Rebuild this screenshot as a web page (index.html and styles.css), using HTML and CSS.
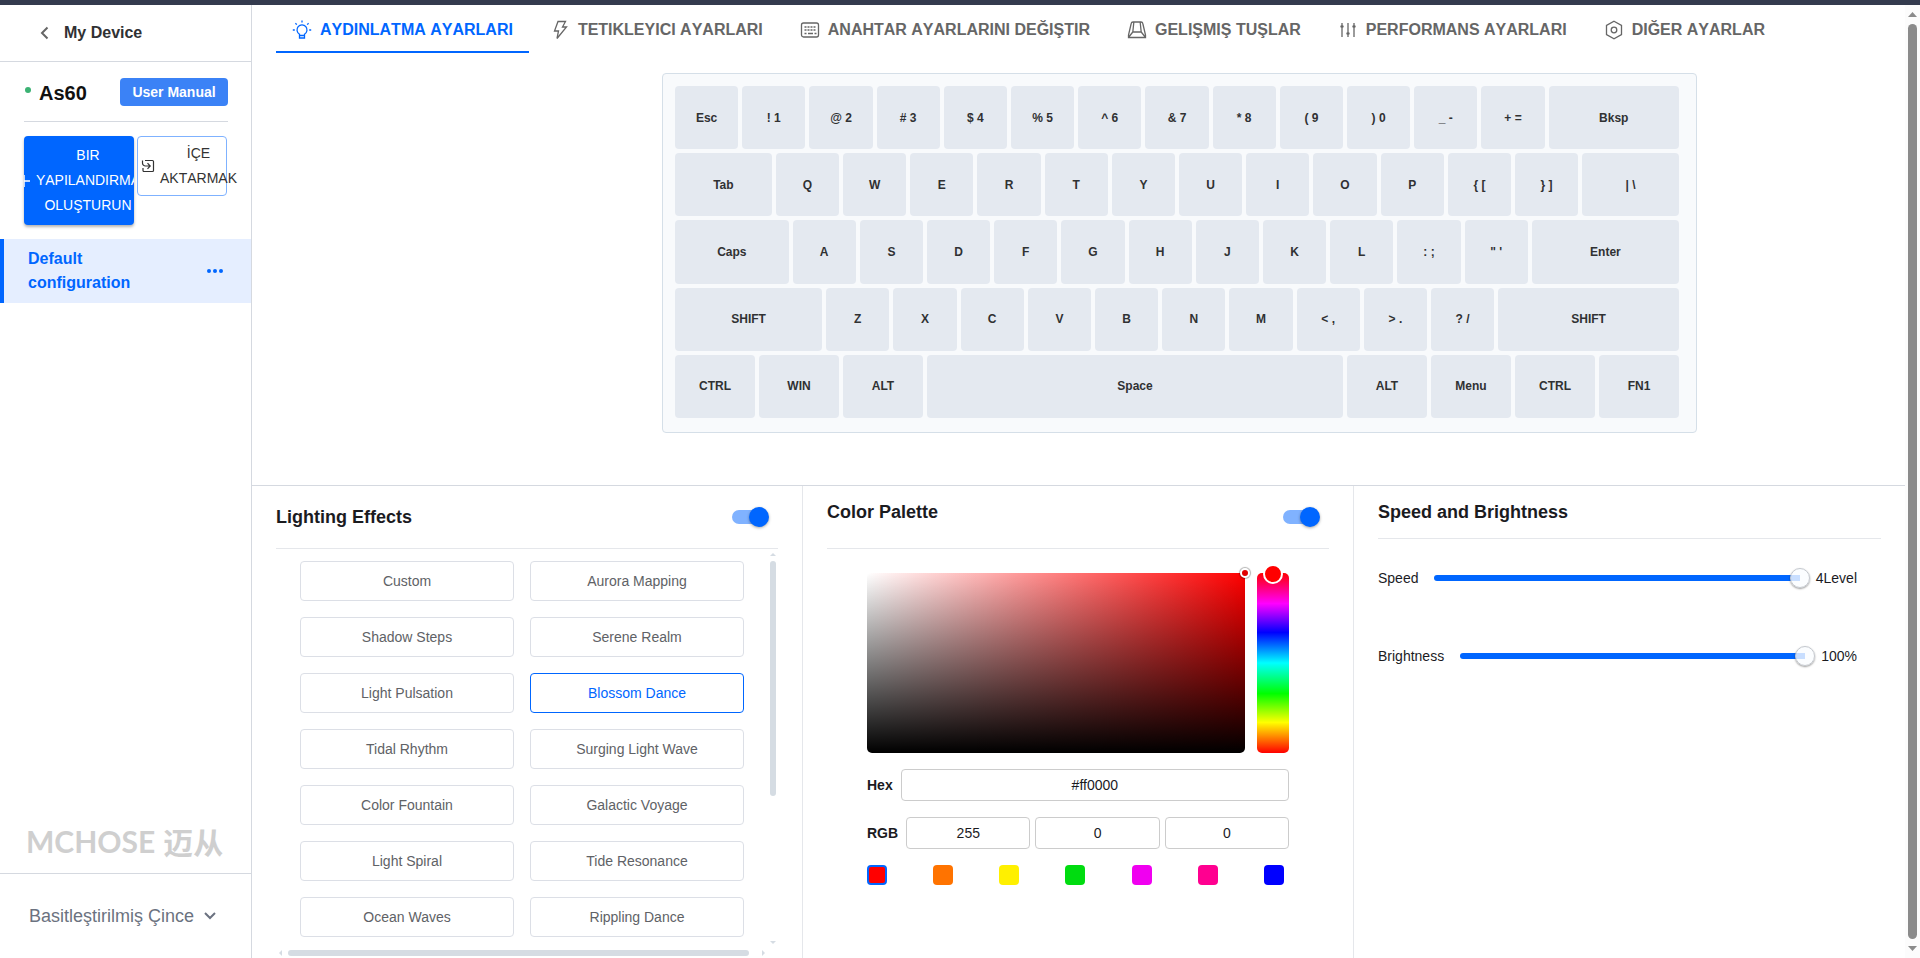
FILE: index.html
```html
<!DOCTYPE html>
<html lang="tr">
<head>
    <meta charset="UTF-8">
    <meta name="viewport" content="width=device-width, initial-scale=1.0">
    <title>MCHOSE As60</title>
    <link rel="stylesheet" href="styles.css">
</head>
<body>
    <div class="topbar"></div>
    <div class="layout">
        <aside class="sidebar">
            <a href="#" class="back">
                <svg width="12" height="14" viewBox="0 0 12 14" fill="none" stroke="#666" stroke-width="2"><path d="M7.5 1.500 2 7l5.500 5.500"/></svg>
                My Device
            </a>
            <div class="device">
                <span class="dot"></span>
                <h1>As60</h1>
                <button class="manual-btn">User Manual</button>
            </div>
            <div class="actions">
                <button class="create-btn">
                    <svg width="16" height="16" viewBox="0 0 16 16" stroke="#fff" stroke-width="1.5"><path d="M8 2v12M2 8h12"/></svg>
                    <span>BIR YAPILANDIRMA OLUŞTURUN</span>
                </button>
                <button class="import-btn">
                    <svg width="14" height="14" viewBox="0 0 14 14" fill="none" stroke="#333" stroke-width="1.2"><path d="M4 1.5h7.5a1 1 0 0 1 1 1v9a1 1 0 0 1-1 1H3a1 1 0 0 1-1-1V9M1.500 1.500v2.500a3 3 0 0 0 3 3H9M6.500 4.200 9.200 7 6.500 9.800"/></svg>
                    <span>İÇE AKTARMAK</span>
                </button>
            </div>
            <div class="config active">
                <span class="config-name">Default configuration</span>
                <button class="more-btn" aria-label="More">
                    <svg width="16" height="4" viewBox="0 0 16 4" fill="#0066ff"><circle cx="2" cy="2" r="2"/><circle cx="8" cy="2" r="2"/><circle cx="14" cy="2" r="2"/></svg>
                </button>
            </div>
            <div class="brand"><span class="brand-en">MCHOSE</span><span class="brand-cn">迈从</span></div>
            <div class="language">
                <select aria-label="Dil">
                    <option>Basitleştirilmiş Çince</option>
                </select>
                <svg width="12" height="8" viewBox="0 0 12 8" fill="none" stroke="#6b7280" stroke-width="2"><path d="M1 1l5 5 5-5"/></svg>
            </div>
        </aside>

        <main class="main">
            <nav class="tabs">
                <a href="#" class="tab active">
                    <svg width="20" height="20" viewBox="0 0 20 20"><path d="M7.500 15.500v-1.300a5 5 0 1 1 5 0v1.300zM7.500 15.500v2.500h5v-2.500M10 .5v2M3.400 3.200l1.400 1.400M16.600 3.200l-1.400 1.400M.8 10h2M17.200 10h2"/></svg>
                    AYDINLATMA AYARLARI
                </a>
                <a href="#" class="tab">
                    <svg width="20" height="20" viewBox="0 0 20 20"><path d="M8 1.500h7.500l-3 5.500h4L7 18.500l1.500-7.500H4.500z"/></svg>
                    TETIKLEYICI AYARLARI
                </a>
                <a href="#" class="tab">
                    <svg width="20" height="20" viewBox="0 0 20 20"><rect x="1.5" y="3" width="17" height="14" rx="2"/><path d="M4.500 7h11.500M4.500 10h11.500" stroke-dasharray="2 1"/><path d="M4.500 13.500h2M8 13.500h5M14.500 13.500h2"/></svg>
                    ANAHTAR AYARLARINI DEĞIŞTIR
                </a>
                <a href="#" class="tab">
                    <svg width="20" height="20" viewBox="0 0 20 20"><path d="M6 2h8q1.500 0 1.800 1.500L18.500 15v2.500h-17V15L4.200 3.500Q4.500 2 6 2zM6.800 2.500 5.800 12h8.400l-1-9.500M5.800 12l-4 5M14.200 12l4 5"/></svg>
                    GELIŞMIŞ TUŞLAR
                </a>
                <a href="#" class="tab">
                    <svg width="20" height="20" viewBox="0 0 20 20"><path d="M4 3v14M10 3v14M16 3v14M2.500 6.500h3M8.500 13.500h3M14.500 6.500h3"/><path d="M4 5.500v2M10 12.500v2M16 5.500v2" stroke-width="2.5"/></svg>
                    PERFORMANS AYARLARI
                </a>
                <a href="#" class="tab">
                    <svg width="20" height="20" viewBox="0 0 20 20"><path d="M10 1.200l7.500 4.300v9L10 18.800l-7.500-4.300v-9z"/><circle cx="10" cy="10" r="2.8"/></svg>
                    DIĞER AYARLAR
                </a>
            </nav>

            <section class="stage">
                <div class="keyboard">
                    <button class="key">Esc</button>
                    <button class="key">! 1</button>
                    <button class="key">@ 2</button>
                    <button class="key"># 3</button>
                    <button class="key">$ 4</button>
                    <button class="key">% 5</button>
                    <button class="key">^ 6</button>
                    <button class="key">&amp; 7</button>
                    <button class="key">* 8</button>
                    <button class="key">( 9</button>
                    <button class="key">) 0</button>
                    <button class="key">_ -</button>
                    <button class="key">+ =</button>
                    <button class="key u200">Bksp</button>

                    <button class="key u150">Tab</button>
                    <button class="key">Q</button>
                    <button class="key">W</button>
                    <button class="key">E</button>
                    <button class="key">R</button>
                    <button class="key">T</button>
                    <button class="key">Y</button>
                    <button class="key">U</button>
                    <button class="key">I</button>
                    <button class="key">O</button>
                    <button class="key">P</button>
                    <button class="key">{ [</button>
                    <button class="key">} ]</button>
                    <button class="key u150">| \</button>

                    <button class="key u175">Caps</button>
                    <button class="key">A</button>
                    <button class="key">S</button>
                    <button class="key">D</button>
                    <button class="key">F</button>
                    <button class="key">G</button>
                    <button class="key">H</button>
                    <button class="key">J</button>
                    <button class="key">K</button>
                    <button class="key">L</button>
                    <button class="key">: ;</button>
                    <button class="key">" '</button>
                    <button class="key u225">Enter</button>

                    <button class="key u225">SHIFT</button>
                    <button class="key">Z</button>
                    <button class="key">X</button>
                    <button class="key">C</button>
                    <button class="key">V</button>
                    <button class="key">B</button>
                    <button class="key">N</button>
                    <button class="key">M</button>
                    <button class="key">&lt; ,</button>
                    <button class="key">&gt; .</button>
                    <button class="key">? /</button>
                    <button class="key u275">SHIFT</button>

                    <button class="key u125">CTRL</button>
                    <button class="key u125">WIN</button>
                    <button class="key u125">ALT</button>
                    <button class="key u625">Space</button>
                    <button class="key u125">ALT</button>
                    <button class="key u125">Menu</button>
                    <button class="key u125">CTRL</button>
                    <button class="key u125">FN1</button>
                </div>
            </section>

            <div class="panels">
                <section class="panel">
                    <div class="panel-header tall">
                        <h2><label for="lighting">Lighting Effects</label></h2>
                        <input type="checkbox" id="lighting" class="switch" checked>
                    </div>
                    <div class="effects-wrap">
                        <div class="effects">
                            <button class="effect">Custom</button>
                            <button class="effect">Aurora Mapping</button>
                            <button class="effect">Shadow Steps</button>
                            <button class="effect">Serene Realm</button>
                            <button class="effect">Light Pulsation</button>
                            <button class="effect active">Blossom Dance</button>
                            <button class="effect">Tidal Rhythm</button>
                            <button class="effect">Surging Light Wave</button>
                            <button class="effect">Color Fountain</button>
                            <button class="effect">Galactic Voyage</button>
                            <button class="effect">Light Spiral</button>
                            <button class="effect">Tide Resonance</button>
                            <button class="effect">Ocean Waves</button>
                            <button class="effect">Rippling Dance</button>
                        </div>
                        <div class="scroll-y">
                            <svg width="6" height="3" viewBox="0 0 6 3"><path d="M0 3l3-3 3 3z"/></svg>
                            <div class="thumb"></div>
                            <svg class="end" width="6" height="3" viewBox="0 0 6 3"><path d="M0 0l3 3 3-3z"/></svg>
                        </div>
                    </div>
                    <div class="scroll-x">
                        <svg width="3" height="6" viewBox="0 0 3 6"><path d="M3 0L0 3l3 3z"/></svg>
                        <div class="thumb"></div>
                        <svg width="3" height="6" viewBox="0 0 3 6"><path d="M0 0l3 3-3 3z"/></svg>
                    </div>
                </section>

                <section class="panel">
                    <div class="panel-header tall">
                        <h2 class="top"><label for="palette">Color Palette</label></h2>
                        <input type="checkbox" id="palette" class="switch" checked>
                    </div>
                    <div class="picker">
                        <div class="picker-area">
                            <div class="saturation"><span class="sat-cursor"></span></div>
                            <div class="hue"><span class="hue-cursor"></span></div>
                        </div>
                        <div class="field">
                            <label for="hex">Hex</label>
                            <input type="text" id="hex" value="#ff0000">
                        </div>
                        <div class="field rgb">
                            <label for="red">RGB</label>
                            <input type="text" id="red" value="255">
                            <input type="text" aria-label="G" value="0">
                            <input type="text" aria-label="B" value="0">
                        </div>
                        <div class="swatches">
                            <button class="swatch red active" aria-label="Red"></button>
                            <button class="swatch orange" aria-label="Orange"></button>
                            <button class="swatch yellow" aria-label="Yellow"></button>
                            <button class="swatch green" aria-label="Green"></button>
                            <button class="swatch magenta" aria-label="Magenta"></button>
                            <button class="swatch pink" aria-label="Pink"></button>
                            <button class="swatch blue" aria-label="Blue"></button>
                        </div>
                    </div>
                </section>

                <section class="panel">
                    <div class="panel-header">
                        <h2>Speed and Brightness</h2>
                    </div>
                    <div class="sliders">
                        <div class="slider-row">
                            <label for="speed">Speed</label>
                            <input type="range" id="speed" min="0" max="4" value="4">
                            <span>4Level</span>
                        </div>
                        <div class="slider-row">
                            <label for="brightness">Brightness</label>
                            <input type="range" id="brightness" min="0" max="100" value="100">
                            <span>100%</span>
                        </div>
                    </div>
                </section>
            </div>
        </main>

        <div class="page-scroll">
            <svg width="9" height="5" viewBox="0 0 9 5"><path d="M0 5L4.500 0 9 5z"/></svg>
            <div class="thumb"></div>
            <svg width="9" height="5" viewBox="0 0 9 5"><path d="M0 0l4.500 5L9 0z"/></svg>
        </div>
    </div>
</body>
</html>
```

FILE: styles.css
```css
* {
    box-sizing: border-box;
}
body {
    margin: 0;
    height: 100vh;
    display: flex;
    flex-direction: column;
    overflow: hidden;
    font-family: "Liberation Sans", Arial, sans-serif;
    font-size: 14px;
    color: #1b1b1f;
    background-color: #fff;
}
button, input, select {
    font-family: inherit;
    font-size: 14px;
    margin: 0;
}
button {
    cursor: pointer;
    border: none;
}
a {
    text-decoration: none;
}
svg {
    flex-shrink: 0;
}
.topbar {
    height: 5px;
    flex-shrink: 0;
    background-color: #343b4e;
}
.layout {
    flex: 1;
    min-height: 0;
    display: flex;
}

/* Sidebar */
.sidebar {
    width: 252px;
    flex-shrink: 0;
    display: flex;
    flex-direction: column;
    border-right: 1px solid #d5d9e0;
}
.back {
    display: flex;
    align-items: center;
    gap: 12px;
    height: 57px;
    padding: 0 40px;
    border-bottom: 1px solid #d5d9e0;
    font-size: 16px;
    font-weight: bold;
    color: #303133;
}
.device {
    display: flex;
    align-items: center;
    margin: 0 23px 14px 24px;
    padding: 16px 0 15px;
    border-bottom: 1px solid #d5d9e0;
}
.dot {
    width: 6px;
    height: 6px;
    margin: 0 8px 4px 1px;
    border-radius: 50%;
    background-color: #3bb273;
}
.device h1 {
    margin: 0;
    padding-top: 2px;
    font-size: 20px;
    line-height: 26px;
    color: #111;
}
.manual-btn {
    margin-left: auto;
    width: 108px;
    height: 28px;
    padding: 0;
    border-radius: 4px;
    background-color: #3b82f6;
    color: #fff;
    font-weight: bold;
}
.actions {
    display: flex;
    align-items: flex-start;
    gap: 3px;
    padding: 0 24px 14px;
}
.create-btn, .import-btn {
    display: flex;
    align-items: center;
    flex-shrink: 0;
    border-radius: 4px;
    line-height: 25px;
    font-kerning: none;
}
.create-btn {
    justify-content: center;
    gap: 4px;
    width: 110px;
    padding: 7px 2px 7px 0;
    overflow: hidden;
    background-color: #0066ff;
    color: #fff;
    box-shadow: 0 2px 3px rgba(0,0,0,0.3);
}
.import-btn {
    gap: 5px;
    width: 90px;
    padding: 4px 3px;
    border: 1px solid #7fb2ff;
    background-color: #fff;
    color: #333;
}
.config {
    display: flex;
    align-items: center;
    justify-content: space-between;
    padding: 8px 28px 8px 24px;
    border-left: 4px solid #0066ff;
    background-color: #e5eeff;
}
.config-name {
    width: 110px;
    font-size: 16px;
    line-height: 24px;
    font-weight: bold;
    color: #0066ff;
}
.more-btn {
    display: flex;
    padding: 0;
    background: none;
}
.brand {
    display: flex;
    align-items: center;
    gap: 8px;
    height: 60px;
    margin-top: auto;
    padding: 0 26px 4px;
    color: #cfcfcf;
    font-weight: bold;
    white-space: nowrap;
}
.brand-en {
    font-family: Lato, sans-serif;
    font-size: 30px;
}
.brand-cn {
    font-family: "Noto Sans CJK SC", sans-serif;
    font-size: 30px;
    line-height: 32px;
}
.language {
    display: flex;
    align-items: center;
    gap: 9px;
    height: 85px;
    padding-left: 29px;
    border-top: 1px solid #d5d9e0;
}
.language select {
    appearance: none;
    border: none;
    padding: 0;
    background: none;
    font-size: 18px;
    color: #6b7280;
}

/* Tabs */
.main {
    flex: 1;
    min-width: 0;
    display: flex;
    flex-direction: column;
}
.tabs {
    display: flex;
    gap: 5px;
    padding-left: 24px;
}
.tab {
    display: flex;
    align-items: center;
    gap: 8px;
    height: 48px;
    padding: 1px 16px 0;
    font-size: 16px;
    font-weight: bold;
    font-kerning: none;
    white-space: nowrap;
    color: #666;
}
.tab svg {
    fill: none;
    stroke: currentColor;
    stroke-width: 1.3;
}
.tab.active {
    color: #0066ff;
    box-shadow: inset 0 -2px #0066ff;
}

/* Keyboard */
.stage {
    display: flex;
    justify-content: center;
    padding: 20px 0 52px 202px;
    border-bottom: 1px solid #d5d9e0;
}
.keyboard {
    display: grid;
    grid-template-columns: repeat(60, 1fr);
    grid-template-rows: repeat(5, 1fr);
    width: 1035px;
    height: 360px;
    padding: 12px 13px 10px 12px;
    border: 1px solid #d5dfe8;
    border-radius: 4px;
    background-color: #f8fafc;
}
/* one key unit = 4 columns */
.key {
    grid-column: span 4;
    min-width: 0;
    margin: 0 4px 4px 0;
    padding: 0;
    border-radius: 4px;
    background-color: #e4e9f0;
    color: #303133;
    font-size: 12px;
    font-weight: bold;
}
.u125 { grid-column: span 5; }
.u150 { grid-column: span 6; }
.u175 { grid-column: span 7; }
.u200 { grid-column: span 8; }
.u225 { grid-column: span 9; }
.u275 { grid-column: span 11; }
.u625 { grid-column: span 25; }

/* Panels */
.panels {
    flex: 1;
    min-height: 0;
    display: grid;
    grid-template-columns: repeat(3, minmax(0, 1fr));
}
.panel {
    display: flex;
    flex-direction: column;
    padding: 0 24px;
    border-right: 1px solid #e5e7eb;
}
.panel:last-child {
    border-right: none;
}
.panel-header {
    display: flex;
    align-items: center;
    justify-content: space-between;
    border-bottom: 1px solid #e5e7eb;
}
.panel-header.tall {
    min-height: 63px;
}
.panel-header h2 {
    margin: 0;
    font-size: 18px;
    line-height: 52px;
}
.panel-header h2.top {
    align-self: flex-start;
}
.switch {
    appearance: none;
    position: relative;
    width: 34px;
    height: 14px;
    margin-right: 12px;
    border-radius: 7px;
    background-color: #80b2ff;
    cursor: pointer;
}
.switch::before {
    content: "";
    position: absolute;
    top: -3px;
    right: -3px;
    width: 20px;
    height: 20px;
    border-radius: 50%;
    background-color: #0066ff;
    box-shadow: 0 1px 3px rgba(0,0,0,0.35);
}
.effects-wrap {
    flex: 1;
    min-height: 0;
    display: flex;
    justify-content: space-between;
}
.effects {
    flex: 1;
    display: grid;
    grid-template-columns: 1fr 1fr;
    align-content: start;
    gap: 16px;
    padding: 12px 26px 0 24px;
}
.effect {
    height: 40px;
    border: 1px solid #dcdfe6;
    border-radius: 4px;
    background-color: #fff;
    color: #606266;
}
.effect.active {
    border-color: #0066ff;
    color: #0066ff;
}
.scroll-y, .scroll-x {
    display: flex;
    align-items: center;
    fill: #d5dce3;
}
.scroll-y {
    flex-direction: column;
    gap: 5px;
    padding: 4px 2px 4px 0;
}
.scroll-y .thumb {
    width: 6px;
    height: 235px;
    border-radius: 3px;
    background-color: #d5dce3;
}
.scroll-y .end {
    margin-top: auto;
}
.scroll-x {
    justify-content: space-between;
    padding: 2px 13px 2px 3px;
}
.scroll-x .thumb {
    flex: 1;
    height: 6px;
    margin: 0 13px 0 6px;
    border-radius: 3px;
    background-color: #d5dce3;
}

/* Color picker */
.picker {
    display: flex;
    flex-direction: column;
    gap: 16px;
    padding: 24px 40px 0;
}
.picker-area {
    display: flex;
    gap: 12px;
    height: 180px;
}
.saturation {
    flex: 1;
    position: relative;
    border-radius: 5px 0 5px 5px;
    background: linear-gradient(to top, #000, transparent), linear-gradient(to right, #fff, #f00);
}
.sat-cursor {
    position: absolute;
    top: -5px;
    right: -5px;
    width: 10px;
    height: 10px;
    border: 2px solid #fff;
    border-radius: 50%;
    background-color: #e00000;
    box-shadow: 0 0 1px 1px rgba(0,0,0,0.3);
}
.hue {
    position: relative;
    width: 32px;
    border-radius: 5px;
    background: linear-gradient(to bottom, #f00 0%, #f0f 17%, #00f 33%, #0ff 50%, #0f0 67%, #ff0 83%, #f00 100%);
}
.hue-cursor {
    position: absolute;
    top: -9px;
    left: 6px;
    width: 20px;
    height: 20px;
    border: 2px solid #fff;
    border-radius: 50%;
    background-color: #f00;
}
.field {
    display: flex;
    align-items: center;
    gap: 8px;
}
.field.rgb {
    gap: 5px;
}
.field label {
    font-weight: bold;
}
.rgb label {
    margin-right: 3px;
}
.field input {
    flex: 1;
    min-width: 0;
    height: 32px;
    border: 1px solid #ccc;
    border-radius: 4px;
    background-color: #fff;
    color: #1b1b1f;
    text-align: center;
}
.swatches {
    display: flex;
    justify-content: space-between;
    padding-right: 5px;
}
.swatch {
    width: 20px;
    height: 20px;
    padding: 0;
    border-radius: 4px;
}
.swatch.active {
    border: 2px solid #0066ff;
}
.red { background-color: #f00; }
.orange { background-color: #ff7300; }
.yellow { background-color: #fff000; }
.green { background-color: #00dc10; }
.magenta { background-color: #f000f0; }
.pink { background-color: #ff0090; }
.blue { background-color: #00f; }

/* Sliders */
.sliders {
    display: flex;
    flex-direction: column;
    gap: 58px;
    padding: 29px 24px 0 0;
}
.slider-row {
    display: flex;
    align-items: center;
    height: 20px;
}
.slider-row label {
    margin-right: 16px;
}
.slider-row span {
    margin-left: 6px;
}
.slider-row input {
    flex: 1;
    min-width: 0;
    height: 20px;
    appearance: none;
    background: none;
}
.slider-row input::-webkit-slider-runnable-track {
    height: 6px;
    border-radius: 3px;
    background: linear-gradient(#0066ff, #0066ff) left / calc(100% - 10px) 100% no-repeat;
}
.slider-row input::-webkit-slider-thumb {
    appearance: none;
    width: 20px;
    height: 20px;
    margin-top: -7px;
    border: 1px solid #c4c8ce;
    border-radius: 50%;
    background-color: rgba(250,252,255,0.8);
    box-shadow: 0 1px 2px rgba(0,0,0,0.4);
}

/* Page scrollbar */
.page-scroll {
    width: 15px;
    display: flex;
    flex-direction: column;
    align-items: center;
    gap: 7px;
    padding: 7px 0;
    background-color: #fcfcfc;
    fill: #8b8b8b;
}
.page-scroll .thumb {
    flex: 1;
    width: 9px;
    border-radius: 5px;
    background-color: #8b8b8b;
}
```
